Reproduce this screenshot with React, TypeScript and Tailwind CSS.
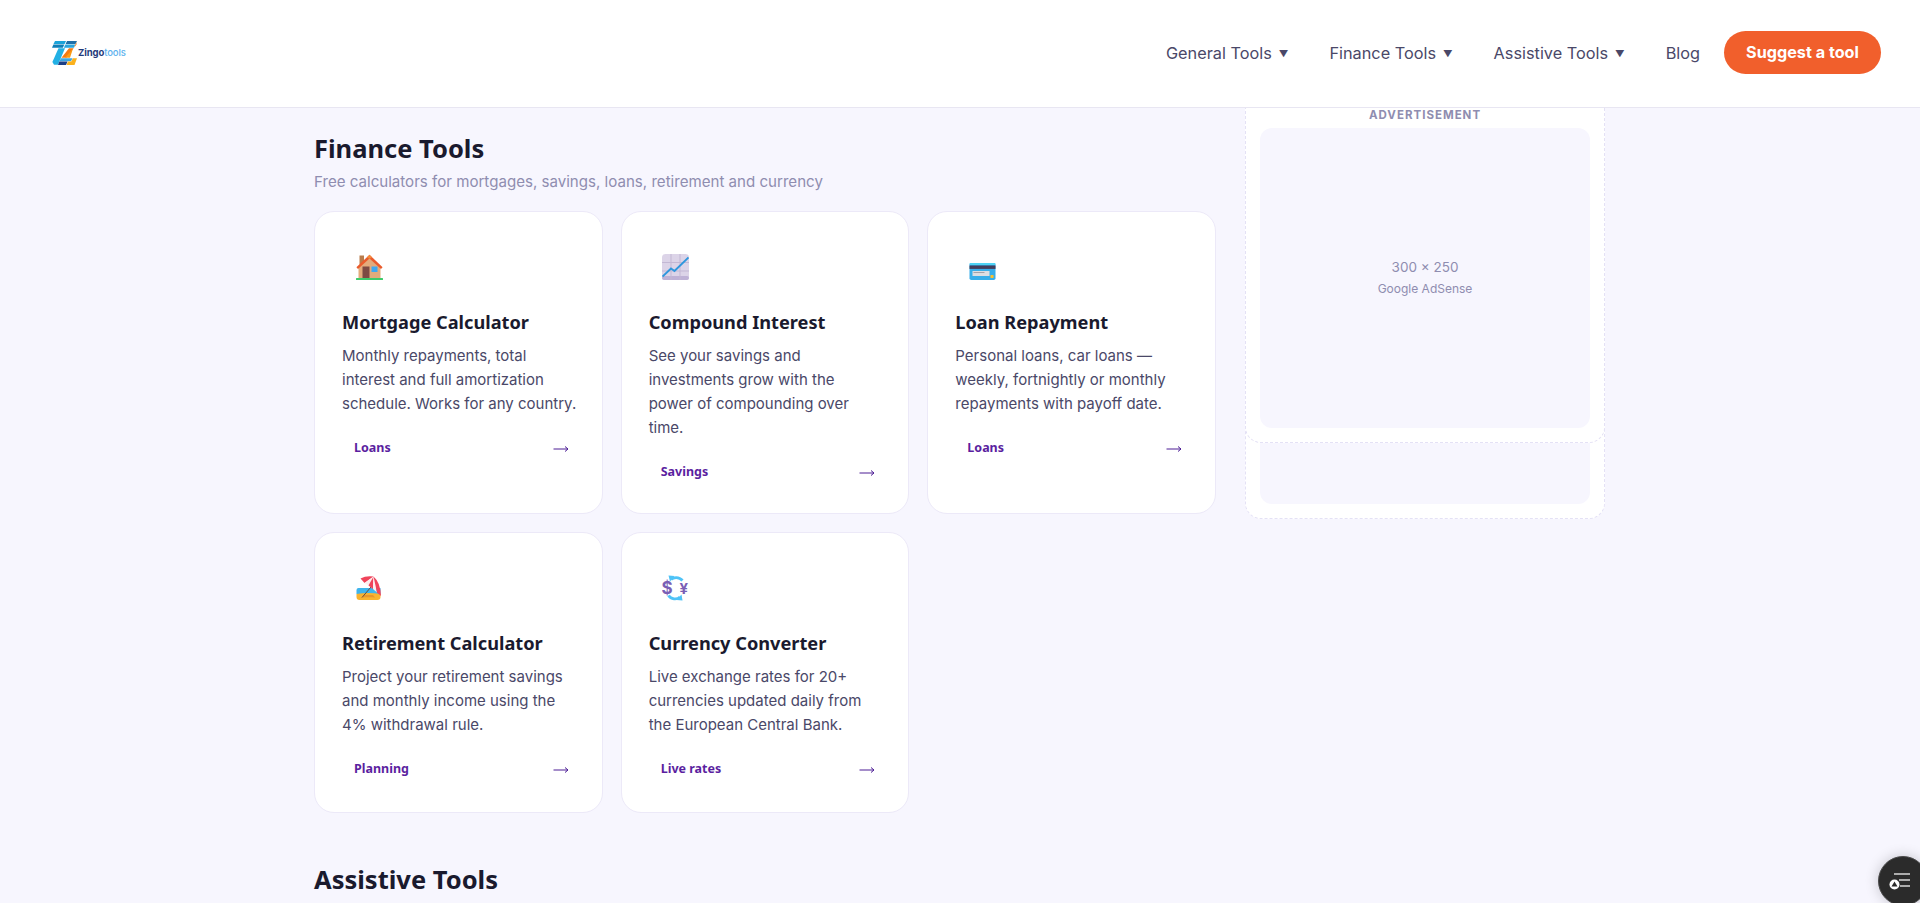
import React from 'react'

const body = "font-['Inter','Liberation_Sans',sans-serif]"
const head = "font-['Noto_Sans','Liberation_Sans',sans-serif]"

function LogoMark() {
  return (
    <svg width="25" height="24" viewBox="0 0 25 24" className="shrink-0">
      <polygon points="3,0 14,0 12.600,3 1.500,3" fill="#1aa3d9" />
      <polygon points="1.400,3.400 12.400,3.400 10.800,6.800 0,6.800" fill="#0f7fb8" />
      <polygon points="15,0 25,0 23.500,3 13.600,3" fill="#1e6fa8" />
      <polygon points="13.400,3.400 23.300,3.400 21.800,6.800 11.800,6.800" fill="#2aa5dc" />
      <polygon points="6.500,7.200 13,7.200 6,23.800 2,23.800 0.400,21" fill="#22b0e4" />
      <polygon points="24.500,1 24.500,3.500 14.500,16.800 9.500,16.800 17,7.200 21.800,7.200" fill="#f47a12" />
      <polygon points="21,7.500 18,16.800 13,16.800" fill="#fb9a14" />
      <polygon points="8.800,17.200 20.500,17.200 19,20.200 7.500,20.200" fill="#3ca7e2" />
      <polygon points="7.300,20.600 15.500,20.600 14,24 6,24" fill="#1d3f86" />
      <polygon points="20.800,17.200 25,17.200 22.500,24 14.500,24 16,20.600 19.300,20.600" fill="#fbb11c" />
    </svg>
  )
}

function House() {
  return (
    <svg width="27" height="26" viewBox="0 0 27 26">
      <rect x="3.500" y="1.500" width="4.500" height="9" fill="#b97c4c" />
      <polygon points="13.500,3 24.500,13 24.500,24.500 2.500,24.500 2.500,13" fill="#e3ab7c" />
      <polygon points="13.500,0.800 26.600,13.200 25,15 13.500,4.600 2,15 0.400,13.200" fill="#ea5b2c" />
      <polygon points="13.500,0.800 16,3.200 13.500,5 11,3.200" fill="#f58a3a" />
      <rect x="6.500" y="12.500" width="7" height="12" fill="#7d4a43" />
      <rect x="15.500" y="12.500" width="6" height="5.500" fill="#3ea8f2" />
      <rect x="0" y="24" width="27" height="2" rx="0.500" fill="#3ecb6b" />
    </svg>
  )
}

function Chart() {
  return (
    <svg width="27" height="26" viewBox="0 0 27 26">
      <rect x="0" y="0" width="27" height="26" rx="3.500" fill="#dcd4e8" />
      <rect x="0" y="22" width="27" height="4" rx="2" fill="#bfb2d6" />
      <path d="M9 0V26M18 0V26M0 8.500H27M0 17H27" stroke="#c3b8d4" strokeWidth="1" />
      <path d="M0.500 22.500L9 14.500L12.500 17L26.500 3.500" fill="none" stroke="#2f97dd" strokeWidth="1.900" />
    </svg>
  )
}

function CreditCard() {
  return (
    <svg width="27" height="26" viewBox="0 0 27 26">
      <rect x="0.500" y="9" width="26" height="17" rx="1.800" fill="#38aeea" />
      <rect x="0.500" y="9" width="26" height="2" rx="1" fill="#4fd3f5" />
      <rect x="0.500" y="11.500" width="26" height="3.400" fill="#433e5c" />
      <rect x="3.500" y="17" width="17" height="5" fill="#dcdde2" />
      <rect x="4.500" y="18" width="11" height="0.900" fill="#9b9ba4" />
      <rect x="21.500" y="21" width="3" height="3" fill="#fbc02d" />
    </svg>
  )
}

function Beach() {
  return (
    <svg width="27" height="26" viewBox="0 0 27 26">
      <path d="M0.500 15A2 2 0 0 1 2.500 13H24.500V19H0.500Z" fill="#3fb4ec" />
      <path d="M0.500 19C8 17.500 17 17.500 24.500 19V22A3 3 0 0 1 21.500 25H3.500A3 3 0 0 1 0.500 22Z" fill="#f9b32f" />
      <path d="M6.500 22.500C9 22 15 22 19 22.500L17 20H8.500Z" fill="#e8972a" />
      <path d="M6 22.500L15 12" stroke="#6a4a3a" strokeWidth="1" />
      {/* canopy wedges */}
      <path d="M4.500 3.500Q10 0.500 17.500 1.500L8.500 8Z" fill="#f0445b" />
      <path d="M17.500 1.500L8.500 8L12.500 10.500Z" fill="#fdeeee" />
      <path d="M17.500 1.500L12.500 10.500L17 14Z" fill="#f0445b" />
      <path d="M17.500 1.500L17 14L21 17.500Z" fill="#fdeeee" />
      <path d="M17.500 1.500Q24.500 7.500 25 21L21 17.500Z" fill="#f0445b" />
    </svg>
  )
}

function Currency() {
  return (
    <svg width="27" height="26" viewBox="0 0 27 26">
      <path d="M9 4.500C11.500 2 17 1.500 20.500 5.500" fill="none" stroke="#4fc3f7" strokeWidth="2.800" />
      <polygon points="6.500,0.500 12.500,1 8,6.500" fill="#4fc3f7" />
      <path d="M6.500 20.500C9 24.500 15 25 18 22" fill="none" stroke="#4fc3f7" strokeWidth="2.800" />
      <polygon points="20.500,25.500 14.500,25 19.500,19.500" fill="#4fc3f7" />
      <text x="-0.500" y="19" fontSize="17" fontWeight="700" fill="#7a5fb5" fontFamily="Inter, sans-serif">$</text>
      <text x="17.500" y="18.500" fontSize="15" fontWeight="700" fill="#7a5fb5" fontFamily="Inter, sans-serif">¥</text>
    </svg>
  )
}

function ArrowRight() {
  return (
    <svg width="16" height="8" viewBox="0 0 16 8" fill="none" stroke="#4c1d95" strokeWidth="1" className="mt-[2px]">
      <path d="M0.500 4H15M12 1.500L15 4L12 6.500" />
    </svg>
  )
}

const tools = [
  { icon: <House />, title: 'Mortgage Calculator', lines: ['Monthly repayments, total', 'interest and full amortization', 'schedule. Works for any country.'], tag: 'Loans' },
  { icon: <Chart />, title: 'Compound Interest', lines: ['See your savings and', 'investments grow with the', 'power of compounding over', 'time.'], tag: 'Savings' },
  { icon: <CreditCard />, title: 'Loan Repayment', lines: ['Personal loans, car loans —', 'weekly, fortnightly or monthly', 'repayments with payoff date.'], tag: 'Loans' },
  { icon: <Beach />, title: 'Retirement Calculator', lines: ['Project your retirement savings', 'and monthly income using the', '4% withdrawal rule.'], tag: 'Planning' },
  { icon: <Currency />, title: 'Currency Converter', lines: ['Live exchange rates for 20+', 'currencies updated daily from', 'the European Central Bank.'], tag: 'Live rates' },
]

function Caret() {
  return <span className="text-[9.5px] leading-none ml-[7px] text-[#4a4868]">▼</span>
}

function AdLabel() {
  return (
    <div className="text-center text-[11.5px] leading-[14px] font-bold tracking-[1px] text-[#8f8db0]">ADVERTISEMENT</div>
  )
}

export default function App() {
  return (
    <div className={`relative h-[903px] overflow-hidden bg-[#f7f6fe] ${body}`}>
      <header className="relative z-10 h-[108px] bg-white border-b border-[#e8e6f2] flex items-center justify-between pl-[52px] pr-[39px]">
        <div className="flex items-center -mt-[1px]">
          <LogoMark />
          <span className="text-[9.5px] ml-[1px] font-bold tracking-[-0.1px] text-[#1f3a7a]">
            Zingo<span className="font-medium text-[#5db2ee]">tools</span>
          </span>
        </div>
        <nav className="flex items-center text-[16.3px] text-[#4a4868]">
          <a className="flex items-center mr-[41px]">General Tools<Caret /></a>
          <a className="flex items-center mr-[41px]">Finance Tools<Caret /></a>
          <a className="flex items-center mr-[41px]">Assistive Tools<Caret /></a>
          <a className="mr-[24px]">Blog</a>
          <a className="h-[43px] w-[157px] -mt-[2px] rounded-full bg-[#f15f2c] text-white font-bold text-[16.2px] flex items-center justify-center">
            Suggest a tool
          </a>
        </nav>
      </header>

      <main className="ml-[314px] flex gap-[29px] items-start">
        <section className="w-[902px] pt-[24px]">
          <h2 className={`${head} text-[25.5px] leading-[32px] font-bold text-[#1a1a2e]`}>Finance Tools</h2>
          <p className="mt-[7px] text-[15.1px] leading-[22px] text-[#8f8db0]">
            Free calculators for mortgages, savings, loans, retirement and currency
          </p>
          <div className="mt-[18px] grid grid-cols-3 gap-[18px]">
            {tools.map(t => (
              <article key={t.title} className="min-h-[281px] bg-white border border-[#ece9f8] rounded-[20px] px-[27px] pt-[28px] pb-[29px]">
                <div className="w-[54px] h-[54px] flex items-center justify-center">{t.icon}</div>
                <h3 className={`${head} mt-[16px] text-[18.2px] leading-[24px] font-bold text-[#1a1a2e]`}>{t.title}</h3>
                <p className="mt-[10px] text-[15px] leading-[24px] text-[#4a4868]">
                  {t.lines.map(l => <span key={l} className="block whitespace-nowrap">{l}</span>)}
                </p>
                <div className="mt-[20px] h-[24px] flex items-center justify-between pl-[12px] pr-[6px]">
                  <span className={`${head} text-[12.5px] font-bold text-[#5b1fa0]`}>{t.tag}</span>
                  <ArrowRight />
                </div>
              </article>
            ))}
          </div>
          <h2 className={`${head} mt-[50px] text-[25.5px] leading-[32px] font-bold text-[#1a1a2e]`}>Assistive Tools</h2>
        </section>

        <aside className="relative w-[360px] h-[411px]">
          <div className="h-full bg-white border border-t-0 border-dashed border-[#e4e1f5] rounded-b-[16px] px-[14px] pb-[14px] flex flex-col justify-end">
            <div className="h-[76px] bg-[#f7f6fe] rounded-[12px]" />
          </div>
          <div className="absolute inset-x-0 top-0 h-[335px] bg-white border border-t-0 border-dashed border-[#e4e1f5] rounded-b-[16px] px-[14px]">
            <AdLabel />
            <div className="mt-[6px] h-[300px] bg-[#f7f6fe] rounded-[12px] flex flex-col items-center justify-center text-[#8f8db0]">
              <span className="text-[13.5px] leading-[22px]">300 × 250</span>
              <span className="text-[12px] leading-[22px]">Google AdSense</span>
            </div>
          </div>
        </aside>
      </main>

      <button className="absolute left-[1878px] top-[856px] w-[50px] h-[50px] rounded-full bg-[#2b2b2b] border border-[#4a4a4a] shadow-[0_0_14px_rgba(0,0,0,0.2)]">
        <svg width="50" height="50" viewBox="0 0 50 50" className="absolute -left-px -top-px">
          <path d="M16 18H32M21 24H32M22 30H32" stroke="#d8d8d8" strokeWidth="1.500" />
          <circle cx="16.500" cy="28.500" r="5" fill="#fff" />
          <polygon points="16.500,25.500 19.500,30.500 13.500,30.500" fill="#2b2b2b" />
        </svg>
      </button>
    </div>
  )
}
